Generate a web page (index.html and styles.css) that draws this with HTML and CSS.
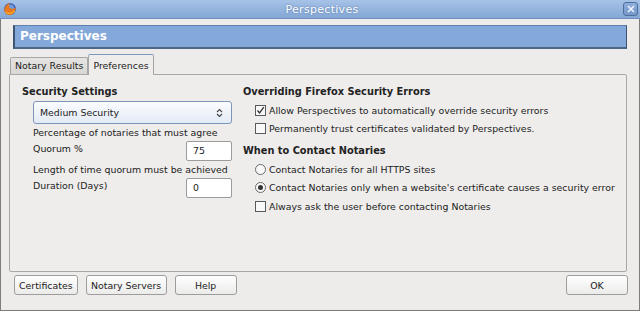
FILE: index.html
```html
<!DOCTYPE html>
<html lang="en">
<head>
    <meta charset="UTF-8">
    <title>Perspectives</title>
    <link rel="stylesheet" href="styles.css">
</head>
<body>
    <div class="window">
        <div class="titlebar">
            <svg class="app-icon" width="14" height="14" viewBox="0 0 14 14">
                <circle cx="7" cy="7" r="6" fill="#3b64b4"/>
                <circle cx="7.5" cy="6" r="3.5" fill="#6f9ae0"/>
                <path d="M1.2 8.5 C1.5 3 5 1 8 1.5 C6 2.5 5.5 4 6.5 5.5 C8 7.5 11 7 12.6 5.2 C13.3 9.5 10 13 6.8 13 C3.8 13 1.6 11 1.2 8.5 Z" fill="#e8771e"/>
                <path d="M3 10 C5 12 9 12 11.5 9" stroke="#f6b02c" stroke-width="1.2" fill="none"/>
            </svg>
            <div class="title">Perspectives</div>
            <div class="close-btn">
                <svg width="8" height="8" viewBox="0 0 8 8">
                    <path d="M1 1 L7 7 M7 1 L1 7" stroke="#eef3fb" stroke-width="1.6"/>
                </svg>
            </div>
        </div>

        <div class="body">
            <div class="banner">Perspectives</div>

            <div class="tabs">
                <div class="tab">Notary Results</div>
                <div class="tab active">Preferences</div>
            </div>

            <div class="panel">
                <div class="col left">
                    <div class="heading">Security Settings</div>
                    <div class="select">
                        <span>Medium Security</span>
                        <svg width="7" height="10" viewBox="0 0 7 10">
                            <path d="M1 4 L3.5 1.5 L6 4 M1 6 L3.5 8.5 L6 6" stroke="#444" stroke-width="1.1" fill="none"/>
                        </svg>
                    </div>
                    <div class="line">Percentage of notaries that must agree</div>
                    <div class="field-row">
                        <span class="field-label">Quorum %</span>
                        <div class="textbox">75</div>
                    </div>
                    <div class="line">Length of time quorum must be achieved</div>
                    <div class="field-row">
                        <span class="field-label">Duration (Days)</span>
                        <div class="textbox">0</div>
                    </div>
                </div>

                <div class="col right">
                    <div class="heading">Overriding Firefox Security Errors</div>
                    <div class="option">
                        <span class="check checked">
                            <svg width="9" height="9" viewBox="0 0 9 9">
                                <path d="M1.5 4.5 L3.6 7 L7.8 1.2" stroke="#333" stroke-width="1.3" fill="none"/>
                            </svg>
                        </span>
                        Allow Perspectives to automatically override security errors
                    </div>
                    <div class="option">
                        <span class="check"></span>
                        Permanently trust certificates validated by Perspectives.
                    </div>

                    <div class="heading second">When to Contact Notaries</div>
                    <div class="option">
                        <span class="radio"></span>
                        Contact Notaries for all HTTPS sites
                    </div>
                    <div class="option">
                        <span class="radio selected"></span>
                        Contact Notaries only when a website's certificate causes a security error
                    </div>
                    <div class="option">
                        <span class="check"></span>
                        Always ask the user before contacting Notaries
                    </div>
                </div>
            </div>

            <div class="buttons">
                <button class="btn">Certificates</button>
                <button class="btn servers">Notary Servers</button>
                <button class="btn">Help</button>
                <button class="btn ok">OK</button>
            </div>
        </div>
    </div>
</body>
</html>
```

FILE: styles.css
```css
body {
    margin: 0;
    padding: 0;
    font-family: 'DejaVu Sans', 'Liberation Sans', sans-serif;
    font-size: 9.4px;
    color: #222;
    background: #edeceb;
}

.window {
    width: 640px;
    height: 311px;
    box-sizing: border-box;
    border: 1px solid #7c7c7c;
    border-top: none;
    background: #edeceb;
}

.titlebar {
    height: 19px;
    display: flex;
    align-items: center;
    padding: 0 2px 0 3px;
    background: linear-gradient(#a6c2e7, #84a7d6);
    border-bottom: 1px solid #6f8fbe;
    box-sizing: border-box;
    margin: 0 -1px;
}

.app-icon {
    flex: none;
}

.title {
    flex: 1;
    text-align: center;
    color: #fff;
    font-size: 11px;
    letter-spacing: 0.3px;
    text-shadow: 0 0 2px #4f6f9f;
    padding-left: 4px;
}

.close-btn {
    width: 13px;
    height: 12px;
    border: 1px solid #4e6e9c;
    border-radius: 3px;
    background: linear-gradient(#8eaedb, #7497ca);
    display: flex;
    align-items: center;
    justify-content: center;
}

.body {
    padding: 6px 12px 0 8px;
}

.banner {
    margin-left: 4px;
    height: 24px;
    box-sizing: border-box;
    background: #84a8d9;
    border: 1px solid #5f7fad;
    border-left: 2px solid #3e5474;
    border-bottom: 2px solid #4d6587;
    border-right: 1px solid #3e5474;
    color: #fff;
    font-weight: bold;
    font-size: 12px;
    padding-left: 5px;
    line-height: 21px;
}

.tabs {
    display: flex;
    align-items: flex-end;
    margin-top: 4px;
    padding-left: 1px;
    height: 21px;
}

.tab {
    height: 16px;
    line-height: 16px;
    padding: 0 4px;
    border: 1px solid #a6a6a6;
    border-bottom: none;
    border-radius: 2px 2px 0 0;
    background: linear-gradient(#e6e5e3, #d8d7d4);
}

.tab.active {
    height: 20px;
    line-height: 21px;
    padding: 0 4px;
    background: #eeedec;
    border-color: #a6a6a6;
    border-top: 1px solid #7d98c0;
    margin-bottom: -1px;
    position: relative;
}

.panel {
    height: 198px;
    box-sizing: border-box;
    border: 1px solid #a8a8a8;
    border-radius: 0 2px 2px 2px;
    background: #eeedec;
    display: flex;
    padding: 8px 0 0 12px;
}

.col {
    display: flex;
    flex-direction: column;
}

.left {
    flex: none;
    width: 210px;
}

.right {
    margin-left: 11px;
}

.heading {
    font-weight: bold;
    font-size: 9.8px;
    line-height: 18px;
}

.heading.second {
    margin-top: 4px;
}

.select {
    margin-left: 11px;
    height: 23px;
    box-sizing: border-box;
    border: 1px solid #7d96ba;
    border-radius: 3px;
    background: linear-gradient(#fbfcfe, #e3ebf6);
    display: flex;
    align-items: center;
    justify-content: space-between;
    padding: 0 8px 0 6px;
}

.line {
    margin-left: 11px;
    line-height: 18px;
}

.field-row {
    margin-left: 11px;
    display: flex;
    justify-content: space-between;
    align-items: flex-start;
}

.field-label {
    line-height: 14px;
}

.textbox {
    width: 46px;
    height: 20px;
    box-sizing: border-box;
    border: 1px solid #9c9c9c;
    border-radius: 2px;
    background: #fff;
    line-height: 18px;
    padding-left: 6px;
    margin-top: -1px;
}

.option {
    display: flex;
    align-items: center;
    height: 18.5px;
    margin-left: 12px;
}

.check {
    width: 11px;
    height: 11px;
    box-sizing: border-box;
    border: 1px solid #5a5a5a;
    background: #f8f8f8;
    margin-right: 3px;
    display: flex;
    align-items: center;
    justify-content: center;
}

.radio {
    width: 11px;
    height: 11px;
    box-sizing: border-box;
    border: 1px solid #6a6a6a;
    border-radius: 50%;
    background: #f8f8f8;
    margin-right: 3px;
    display: flex;
    align-items: center;
    justify-content: center;
}

.radio.selected::after {
    content: "";
    width: 5px;
    height: 5px;
    border-radius: 50%;
    background: #333;
}

.buttons {
    display: flex;
    margin-top: 3px;
    padding-left: 5px;
    gap: 8px;
}

.btn {
    height: 20px;
    min-width: 62px;
    padding: 0 4px;
    font-family: inherit;
    font-size: 9.4px;
    color: #222;
    border: 1px solid #9d9d9d;
    border-radius: 3px;
    background: linear-gradient(#ffffff, #ebebea);
}

.btn.servers {
    width: 81px;
}

.btn.ok {
    margin-left: auto;
    margin-right: -1px;
}
```
